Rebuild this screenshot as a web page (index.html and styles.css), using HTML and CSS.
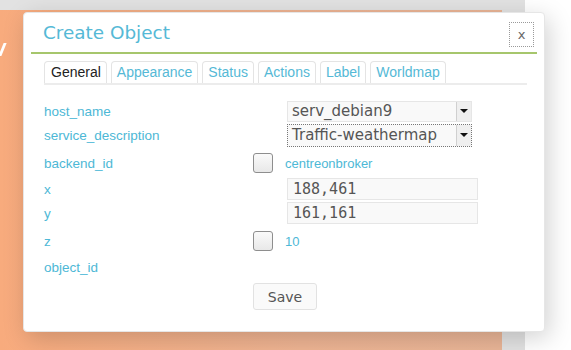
FILE: index.html
```html
<!DOCTYPE html>
<html>
<head>
    <title>Create Object</title>
    <link rel="stylesheet" href="styles.css">
</head>
<body>
    <div class="page">
        <div class="panel">
            <span class="panel-mark"></span>
        </div>
    </div>

    <div class="dialog">
        <div class="dialog-head">
            <h2 class="dialog-title">Create Object</h2>
            <button class="close">x</button>
        </div>

        <ul class="tabs">
            <li class="tab active">General</li>
            <li class="tab">Appearance</li>
            <li class="tab">Status</li>
            <li class="tab">Actions</li>
            <li class="tab">Label</li>
            <li class="tab">Worldmap</li>
        </ul>

        <div class="form">
            <div class="row">
                <span class="label">host_name</span>
                <div class="field">
                    <div class="select">
                        <span class="select-text">serv_debian9</span>
                        <span class="select-arrow"></span>
                    </div>
                </div>
            </div>
            <div class="row">
                <span class="label">service_description</span>
                <div class="field">
                    <div class="select focused">
                        <span class="select-text">Traffic-weathermap</span>
                        <span class="select-arrow"></span>
                    </div>
                </div>
            </div>
            <div class="row check-row">
                <span class="label">backend_id</span>
                <div class="field">
                    <span class="checkbox"></span>
                    <span class="value">centreonbroker</span>
                </div>
            </div>
            <div class="row">
                <span class="label">x</span>
                <div class="field">
                    <input class="text-input" type="text" value="188,461">
                </div>
            </div>
            <div class="row">
                <span class="label">y</span>
                <div class="field">
                    <input class="text-input" type="text" value="161,161">
                </div>
            </div>
            <div class="row check-row">
                <span class="label">z</span>
                <div class="field">
                    <span class="checkbox"></span>
                    <span class="value">10</span>
                </div>
            </div>
            <div class="row">
                <span class="label">object_id</span>
                <div class="field"></div>
            </div>
        </div>

        <div class="actions">
            <button class="save">Save</button>
        </div>
    </div>
</body>
</html>
```

FILE: styles.css
```css
body {
    margin: 0;
    background-color: #ffffff;
    font-family: "Liberation Sans", Arial, sans-serif;
    overflow: hidden;
}

/* page behind the modal */
.page {
    width: 525px;
    height: 350px;
    padding-top: 10px;
    box-sizing: border-box;
    background-color: #e2e2e2;
}

.panel {
    width: 502px;
    height: 340px;
    padding-top: 33px;
    box-sizing: border-box;
    background: linear-gradient(90deg, #f8ab7d 0%, #eeb493 60%, #e9b597 100%);
}

/* bit of white lettering peeking out at the left edge */
.panel-mark {
    display: block;
    width: 3px;
    height: 13px;
    margin-left: 1px;
    background-color: #ffffff;
    transform: skewX(-22deg);
}

/* modal */
.dialog {
    position: absolute;
    left: 23px;
    top: 12px;
    width: 522px;
    height: 320px;
    box-sizing: border-box;
    padding: 0 7px;
    background-color: #ffffff;
    border: 1px solid #e6e6e6;
    border-radius: 4px;
    box-shadow: 4px 6px 24px rgba(0, 0, 0, 0.18);
}

.dialog-head {
    display: flex;
    justify-content: space-between;
    align-items: center;
    height: 39px;
    border-bottom: 2px solid #a6c66c;
}

.dialog-title {
    margin: 0 0 0 12px;
    font-family: "DejaVu Sans", sans-serif;
    font-size: 18.4px;
    font-weight: normal;
    color: #55b9d6;
}

.close {
    width: 25px;
    height: 25px;
    margin-right: 3px;
    margin-top: 4px;
    padding: 0;
    border: 1px dotted #9a9a9a;
    background: #ffffff;
    font-family: "DejaVu Sans", sans-serif;
    font-size: 13px;
    color: #666666;
}

.tabs {
    display: flex;
    gap: 4px;
    margin: 7px 10px 0 13px;
    padding: 0;
    list-style: none;
    border-bottom: 2px solid #ececec;
}

.tab {
    height: 21px;
    line-height: 21px;
    padding: 0 5px;
    border: 1px solid #e4e4e4;
    border-bottom: none;
    border-radius: 4px 4px 0 0;
    font-size: 14px;
    color: #55b9d6;
}

.tab.active {
    padding: 0 5px 0 6px;
    color: #222222;
}

.form {
    display: flex;
    flex-direction: column;
    margin: 14px 0 0 13px;
}

.row {
    display: flex;
    align-items: center;
    height: 24px;
}

.check-row {
    height: 28px;
    margin-top: 2px;
}

.label {
    width: 209px;
    font-size: 13.5px;
    color: #4db8d6;
}

.field {
    display: flex;
    align-items: center;
    gap: 12px;
}

.select {
    display: flex;
    align-items: center;
    justify-content: space-between;
    width: 185px;
    height: 21px;
    margin-left: 34px;
    box-sizing: border-box;
    border: 1px solid #e6e6e6;
    background-color: #f9f9f9;
}

.select.focused {
    height: 23px;
    border: 1px dotted #777777;
}

.select-text {
    padding-left: 4px;
    font-family: "DejaVu Sans", sans-serif;
    font-size: 15px;
    color: #555555;
}

.select-arrow {
    position: relative;
    width: 14px;
    height: 100%;
    border-left: 1px solid #d0d0d0;
    background-color: #efefef;
}

.select-arrow::after {
    content: "";
    position: absolute;
    left: 3px;
    top: 50%;
    margin-top: -2px;
    border-left: 4px solid transparent;
    border-right: 4px solid transparent;
    border-top: 4px solid #111111;
}

.checkbox {
    width: 18px;
    height: 18px;
    border: 1px solid #8e8e8e;
    border-radius: 3px;
    background: linear-gradient(#fafafa, #e8e8e8);
}

.value {
    font-size: 13px;
    color: #4db8d6;
}

.text-input {
    width: 191px;
    height: 22px;
    margin-left: 34px;
    padding: 0 5px;
    box-sizing: border-box;
    border: 1px solid #e6e6e6;
    background-color: #f9f9f9;
    font-family: "DejaVu Sans Mono", monospace;
    font-size: 15px;
    color: #555555;
}

.actions {
    display: flex;
    margin: 4px 0 0 222px;
}

.save {
    width: 64px;
    height: 27px;
    border: 1px solid #e2e2e2;
    border-radius: 3px;
    background-color: #fafafa;
    font-family: "DejaVu Sans", sans-serif;
    font-size: 14px;
    color: #555555;
}
```
